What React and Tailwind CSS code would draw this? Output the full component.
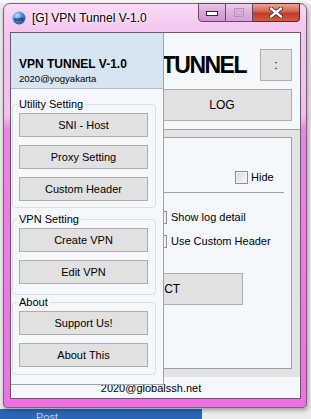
import React from 'react';

function Btn({ children, className = '' }) {
  return (
    <div className={`flex items-center justify-center border border-[#adadad] bg-[#e1e1e1] text-[11px] text-black ${className}`}>
      {children}
    </div>
  );
}

function Check() {
  return (
    <span className="h-[13px] w-[13px] shrink-0 border border-[#8e8f8f] bg-[linear-gradient(135deg,#d8d8d8,#fbfbfb)] shadow-[inset_0_0_0_1px_#f2f2f2]" />
  );
}

function Group({ label, className = '', children }) {
  return (
    <fieldset className={`ml-[1px] w-[144px] rounded-[4px] border border-[#d5dfe5] pl-[6px] pr-[7px] ${className}`}>
      <legend className="-ml-[2px] px-[2px] text-[11px] leading-[14px] text-black">{label}</legend>
      <div className="flex flex-col gap-[8px] pt-[2px]">{children}</div>
    </fieldset>
  );
}

function AppIcon() {
  return (
    <svg width="14" height="14" viewBox="0 0 14 14">
      <defs>
        <radialGradient id="g" cx="0.35" cy="0.3" r="0.8">
          <stop offset="0" stopColor="#bfe3ff" />
          <stop offset="0.5" stopColor="#3b8de0" />
          <stop offset="1" stopColor="#1c4f9c" />
        </radialGradient>
      </defs>
      <circle cx="7" cy="7" r="6.5" fill="url(#g)" />
      <text x="7" y="9.5" fontSize="5.5" fontWeight="700" textAnchor="middle" fill="#1a1a3a" fontFamily="Liberation Sans, sans-serif">ssh</text>
    </svg>
  );
}

function TitleButtons() {
  return (
    <div className="ml-auto mr-[6px] -mt-[1px] flex h-[19px]">
      <div className="flex w-[28px] items-center justify-center rounded-bl-[4px] border border-[#5e4864] bg-[linear-gradient(180deg,#eec6ea,#d9a4d8_50%,#cf93d0)]">
        <span className="mt-[2px] h-[5px] w-[12px] border border-[#2b2b2b] bg-white" />
      </div>
      <div className="flex w-[27px] items-center justify-center border-y border-r border-[#5e4864] bg-[linear-gradient(180deg,#f0cdec,#ddb0dc_50%,#d5a0d5)]">
        <span className="h-[9px] w-[10px] border border-[#b98fbc] p-[1px]">
          <span className="block h-full w-full border border-[#c9a5cb]" />
        </span>
      </div>
      <div className="flex w-[47px] items-center justify-center rounded-br-[4px] border-y border-r border-[#5a2a2a] bg-[linear-gradient(180deg,#eaa696,#d2604c_45%,#c23a28_55%,#d45a44)]">
        <svg width="14" height="11" viewBox="0 0 14 11">
          <path d="M2 1.5 L12 9.5 M12 1.5 L2 9.5" stroke="#3a2020" strokeWidth="4" strokeLinecap="round" />
          <path d="M2 1.5 L12 9.5 M12 1.5 L2 9.5" stroke="#ffffff" strokeWidth="2.4" strokeLinecap="round" />
        </svg>
      </div>
    </div>
  );
}

function Drawer() {
  return (
    <div className="absolute left-0 top-0 flex h-[352px] w-[153px] flex-col border-b border-r border-[#a3a3a3] bg-[#f4f7fc]">
      <div className="h-[56px] shrink-0 border-b border-[#b4bcc6] bg-[#d7e4f1] pl-[8px] pt-[24px]">
        <div className="text-[12px] font-bold leading-[14px] text-black">VPN TUNNEL V-1.0</div>
        <div className="mt-[2px] text-[9.5px] leading-[12px] text-black">2020@yogyakarta</div>
      </div>
      <Group label="Utility Setting" className="mt-[8px] pb-[6px]">
        <Btn className="h-[24px]">SNI - Host</Btn>
        <Btn className="h-[24px]">Proxy Setting</Btn>
        <Btn className="h-[24px]">Custom Header</Btn>
      </Group>
      <Group label="VPN Setting" className="mt-[4px] pb-[10px]">
        <Btn className="h-[24px]">Create VPN</Btn>
        <Btn className="h-[24px]">Edit VPN</Btn>
      </Group>
      <Group label="About" className="pb-[7px]">
        <Btn className="h-[24px]">Support Us!</Btn>
        <Btn className="h-[24px]">About This</Btn>
      </Group>
    </div>
  );
}

function Client() {
  return (
    <div className="relative mb-[8px] ml-[6px] mr-[5px] flex h-[367px] flex-col border border-[#6a566e] bg-[#f4f7fc]">
      <div className="h-[96px] shrink-0 pt-[16px]">
        <div className="flex h-[32px] items-center justify-end pr-[8px]">
          <span className="text-[23px] font-bold leading-[26px] tracking-[-1.5px] text-black">TUNNEL</span>
          <Btn className="ml-[14px] h-[32px] w-[32px] text-[12px]">:</Btn>
        </div>
        <Btn className="ml-auto mr-[8px] mt-[8px] h-[32px] w-[140px] text-[12px]">LOG</Btn>
      </div>
      <div className="h-[248px] shrink-0 border-t border-[#a0a0a0] bg-[#e3e3e3] pt-[7px]">
        <div className="ml-[8px] mr-[8px] h-[232px] border border-[#a0a0a0] bg-[#f4f7fc]">
          <div className="ml-[215px] mt-[33px] flex items-center gap-[3px]">
            <Check />
            <span className="text-[11px] leading-[13px] text-black">Hide</span>
          </div>
          <div className="ml-[8px] mr-[7px] mt-[8px] h-px bg-[#a0a0a0]" />
          <div className="ml-[134px] mt-[18px] flex flex-col gap-[11px]">
            <div className="flex items-center gap-[4px]">
              <Check />
              <span className="text-[11px] leading-[13px] text-black">Show log detail</span>
            </div>
            <div className="flex items-center gap-[4px]">
              <Check />
              <span className="text-[11px] leading-[13px] text-black">Use Custom Header</span>
            </div>
          </div>
          <Btn className="ml-[38px] mt-[25px] h-[32px] w-[185px] text-[12px]">CONNECT</Btn>
        </div>
      </div>
      <div className="flex h-[21px] items-center justify-center pr-[9px] pt-[2px] text-[11px] text-black">2020@globalssh.net</div>
      <Drawer />
    </div>
  );
}

export default function App() {
  return (
    <div className="relative h-[419px] w-[311px] overflow-hidden bg-[#ebebeb] font-['Liberation_Sans',Arial,sans-serif]">
      <div className="flex h-full flex-col">
        <div className="h-[3px] bg-[#f7f7f7]" />
        <div className="flex-1" />
        <div className="h-[10px] w-[202px] bg-[#2b65b6] pl-[36px] pt-[1px] text-[11px] leading-[14px] text-[#bcd0ee]">Post</div>
      </div>
      <div className="absolute left-[3px] top-[3px] flex h-[405px] w-[304px] flex-col rounded-b-[4px] rounded-t-[7px] border border-[#7d5f80] bg-[linear-gradient(180deg,#f9dbf5_0px,#f5c6ee_24px,#f2bfe9_112px,#ef82e4_126px,#ed72e0_100%)] shadow-[1px_2px_4px_rgba(0,0,0,0.35)]">
        <div className="flex h-[28px] shrink-0">
          <div className="flex items-center gap-[6px] pl-[8px]">
            <AppIcon />
            <span className="text-[12px] text-black [text-shadow:0_0_6px_#fff,0_0_3px_#fff]">[G] VPN Tunnel V-1.0</span>
          </div>
          <TitleButtons />
        </div>
        <Client />
      </div>
    </div>
  );
}
